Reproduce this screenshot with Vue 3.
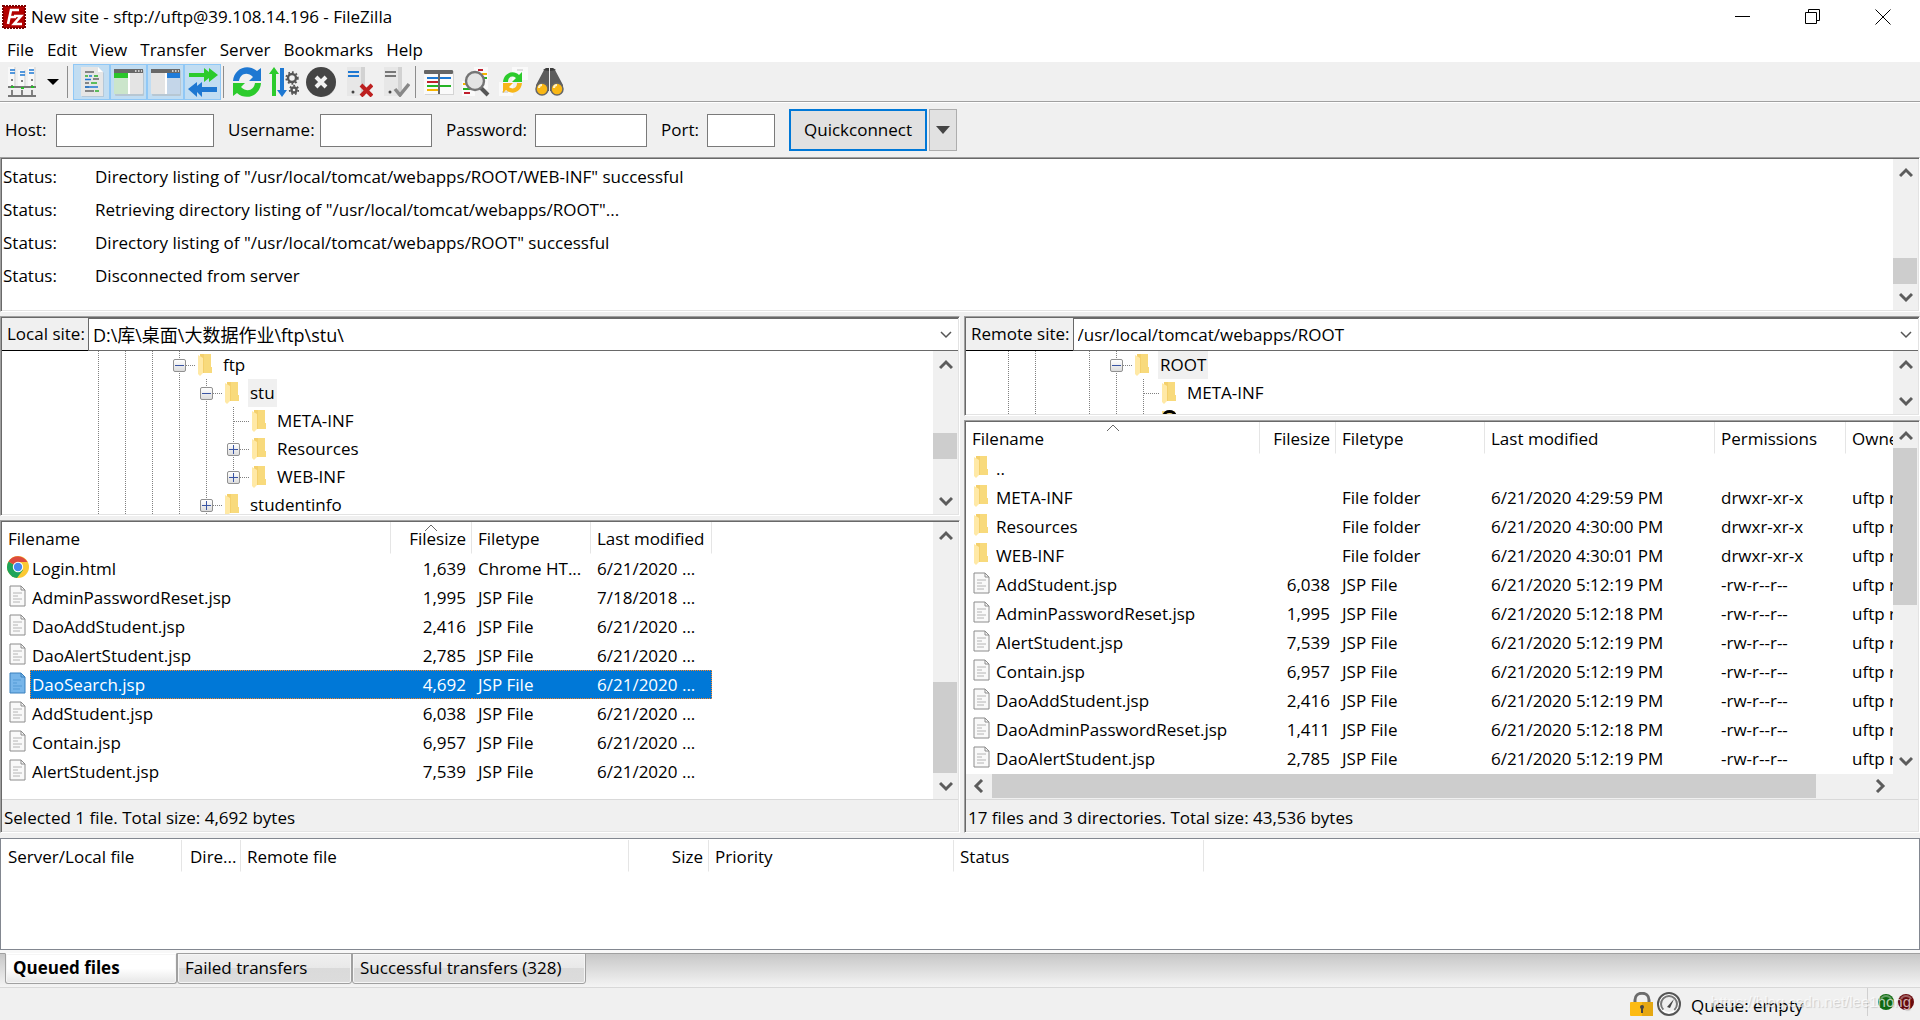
<script setup>
import { h } from 'vue'

const menus = ['File', 'Edit', 'View', 'Transfer', 'Server', 'Bookmarks', 'Help']

const cog = (cx, cy, r) =>
  `<circle cx="${cx}" cy="${cy}" r="${r}" fill="none" stroke="#555" stroke-width="2.4"/>` +
  `<circle cx="${cx}" cy="${cy}" r="${r + 1.8}" fill="none" stroke="#555" stroke-width="1.8" stroke-dasharray="1.8 2"/>`

const windowFrame =
  '<rect x="1" y="3" width="29" height="26" rx="1" fill="#b7c7d3"/><rect x="0" y="2" width="29" height="25" rx="1" fill="#e4e4e4"/><rect x="0" y="2" width="29" height="4" fill="#686868"/><path d="M21 4h1.5M24 4h1.5M27 4h1" stroke="#eee" stroke-width="1.5"/>'

const art = {
  log: '<path d="M5 1h17l5 5v24H5z" fill="#b5c8d8"/><path d="M4 0h17l5 5v24H4z" fill="#e6e6e6"/><path d="M21 0v5h5z" fill="#fff"/><g stroke-width="1.6"><path d="M8 5h9M16 12h6M8 16h4M8 20h4M8 24h9" stroke="#666"/><path d="M8 9h3M14 16h6M18 24h4" stroke="#2fae2f" /><path d="M8 12.5h6M8 20h13M12 9h3" stroke="#1d78d6"/><path d="M17 9h4" stroke="#2fae2f"/></g>',
  local: windowFrame + '<rect x="0" y="6" width="14" height="5" fill="#2bc52b"/><rect x="0" y="11" width="14" height="16" fill="#cbe5cb"/><path d="M15 6v21" stroke="#fff" stroke-width="2"/>',
  remote: windowFrame + '<rect x="16" y="6" width="13" height="5" fill="#1e7bd9"/><rect x="16" y="11" width="13" height="16" fill="#c4d6e9"/><path d="M15 6v21" stroke="#fff" stroke-width="2"/>',
  queue: '<path d="M1 6h15V1l5 4V1l9 7-9 7v-4l-5 4v-5H1z" fill="#2ccb2c"/><path d="M29 20H14v-5l-5 4v-4l-9 7 9 8v-5l5 5v-5h15z" fill="#1e78d2"/>',
  refresh: '<path d="M1 14C2 1 16-4 25 4l4-3v13H17l4-4C15 4 8 7 7 14z" fill="#1e78d2"/><path d="M29 16C28 29 14 34 5 26l-4 3V16h12l-4 4c6 6 13 3 14-4z" fill="#2ccb2c"/>',
  process: '<path d="M5 0l5 7H7v22H3V7H0z" fill="#2ccb2c"/><path d="M13 30l-5-7h3V1h4v22h3z" fill="#1e78d2"/>' + cog(23, 11, 4) + cog(25, 23, 2.5),
  cancel: '<circle cx="16" cy="16" r="14" fill="#c4c4c4"/><circle cx="15" cy="15" r="15" fill="#454545"/><path d="M10 10l10 10M20 10L10 20" stroke="#f2f2f2" stroke-width="4"/>',
  disconnect: '<path d="M4 0h18v29H4z" fill="#e7e7e7"/><path d="M18 0h4v29h-4z" fill="#d2d2d2"/><path d="M5 5h11M5 9h11" stroke="#1e78d2" stroke-width="2"/><circle cx="10" cy="25" r="1.5" fill="#444"/><path d="M18 18l11 11M29 18L18 29" stroke="#bd2020" stroke-width="4"/>',
  reconnect: '<path d="M4 0h18v29H4z" fill="#e7e7e7"/><path d="M18 0h4v29h-4z" fill="#d2d2d2"/><path d="M5 5h11M5 9h11" stroke="#777" stroke-width="2"/><circle cx="10" cy="25" r="1.5" fill="#444"/><path d="M15 22l5 6 9-11" fill="none" stroke="#888" stroke-width="3.5"/>',
  filter: '<rect x="1" y="4" width="29" height="24" fill="#d4d4d4"/><rect x="0" y="3" width="29" height="24" fill="#fafafa"/><rect x="0" y="3" width="29" height="4" rx="1" fill="#666"/><g stroke-width="2"><path d="M3 11h24" stroke="#1e78d2"/><path d="M3 15h11" stroke="#c01f2c"/><path d="M3 19h24" stroke="#24b324"/><path d="M3 23h11" stroke="#f5b400"/></g><path d="M15 7v20" stroke="#666" stroke-width="2"/>',
  compare: '<path d="M13 0h14v22H13z" fill="#fafafa"/><path d="M1 14h13v15H1z" fill="#fafafa"/><g stroke-width="2"><path d="M17 3h5M3 26h6" stroke="#c01f2c"/><path d="M21 7h5M2 17h4" stroke="#f5b400"/><path d="M23 11h3M2 22h7" stroke="#24b324"/></g><path d="M20 21l7 7" stroke="#555" stroke-width="4"/><circle cx="14" cy="14" r="9" fill="#e4e4e4" stroke="#757575" stroke-width="2.4"/>',
  sync: '<path d="M14 0h16v13H14z" fill="#fafafa"/><path d="M1 15h14v14H1z" fill="#fafafa"/><path d="M19 3h6M4 25h6" stroke="#ddd" stroke-width="2"/><path d="M5 15C6 5 16 3 21 8l3-3v10H14l4-4c-4-3-8-1-8 4z" fill="#2ccb2c"/><path d="M24 16C23 26 13 28 8 23l-3 3V16h10l-4 4c4 3 8 1 8-4z" fill="#f7b61a"/>',
  find: '<path d="M9 3l5-1v22H1v-6zM20 3l-5-1v22h13v-6z" fill="#5d5d5d"/><path d="M8 3l3-2h3v3zM15 4V1h3l3 2z" fill="#3c3c3c"/><circle cx="7" cy="22" r="6" fill="#f9b715" stroke="#666" stroke-width="1.5"/><circle cx="22" cy="22" r="6" fill="#f9b715" stroke="#666" stroke-width="1.5"/><path d="M4 21c0-2 1-3 3-3M19 21c0-2 1-3 3-3" stroke="#fff3c8" stroke-width="2" fill="none"/>',
  sites: '<g fill="#e2e2e2"><path d="M1 0h8v20H1zM11 3h8v18h-8zM21 0h8v20h-8z"/></g><g fill="#f8f8f8"><path d="M1 0h6v20H1zM11 3h6v18h-6zM21 0h6v20h-6z"/></g><path d="M3 3h5M3 6h5M13 5h5M13 8h5M22 3h5M22 6h5" stroke="#1e78d2" stroke-width="1.5"/><path d="M5 12v2M15 13v2M25 12v2" stroke="#555" stroke-width="1.5"/><path d="M1 20h28M1 29h28M5 18v3M15 19v3M25 18v3M5 23v6M15 23v6M25 23v6" stroke="#777" stroke-width="1.8"/><path d="M4 20h3M14 21h3M24 20h3" stroke="#28b828" stroke-width="2"/>'
}

const toolbar = [
  { label: 'Toggle message log', icon: 'log', on: true },
  { label: 'Toggle local tree', icon: 'local', on: true },
  { label: 'Toggle remote tree', icon: 'remote', on: true },
  { label: 'Toggle transfer queue', icon: 'queue', on: true },
  null,
  { label: 'Refresh', icon: 'refresh' },
  { label: 'Process queue', icon: 'process' },
  { label: 'Cancel', icon: 'cancel' },
  { label: 'Disconnect', icon: 'disconnect' },
  { label: 'Reconnect', icon: 'reconnect' },
  null,
  { label: 'Filters', icon: 'filter' },
  { label: 'Compare', icon: 'compare' },
  { label: 'Synchronize', icon: 'sync' },
  { label: 'Search', icon: 'find' }
]

const fields = [
  { id: 'host', label: 'Host:', type: 'text' },
  { id: 'user', label: 'Username:', type: 'text' },
  { id: 'pass', label: 'Password:', type: 'password' },
  { id: 'port', label: 'Port:', type: 'text' }
]

const log = [
  'Directory listing of "/usr/local/tomcat/webapps/ROOT/WEB-INF" successful',
  'Retrieving directory listing of "/usr/local/tomcat/webapps/ROOT"...',
  'Directory listing of "/usr/local/tomcat/webapps/ROOT" successful',
  'Disconnected from server'
]

// Guide kinds: l = line, n = nothing, t = branch, m = collapse box, p = expand box, e = last expand box
const localTree = [
  { guides: 'lllm', name: 'ftp' },
  { guides: 'llllm', name: 'stu', current: true },
  { guides: 'lllllt', name: 'META-INF' },
  { guides: 'lllllp', name: 'Resources' },
  { guides: 'llllle', name: 'WEB-INF' },
  { guides: 'llllp', name: 'studentinfo' }
]
const remoteTree = [
  { guides: 'llnlm', name: 'ROOT', current: true },
  { guides: 'llnllt', name: 'META-INF' },
  { guides: 'llnllt', name: '', unknown: true }
]

const localFiles = [
  ['Login.html', '1,639', 'Chrome HT...', '6/21/2020 ...'],
  ['AdminPasswordReset.jsp', '1,995', 'JSP File', '7/18/2018 ...'],
  ['DaoAddStudent.jsp', '2,416', 'JSP File', '6/21/2020 ...'],
  ['DaoAlertStudent.jsp', '2,785', 'JSP File', '6/21/2020 ...'],
  ['DaoSearch.jsp', '4,692', 'JSP File', '6/21/2020 ...'],
  ['AddStudent.jsp', '6,038', 'JSP File', '6/21/2020 ...'],
  ['Contain.jsp', '6,957', 'JSP File', '6/21/2020 ...'],
  ['AlertStudent.jsp', '7,539', 'JSP File', '6/21/2020 ...']
]
const selected = 'DaoSearch.jsp'

const dir = 'drwxr-xr-x'
const reg = '-rw-r--r--'
const remoteFiles = [
  ['..', '', '', '', '', ''],
  ['META-INF', '', 'File folder', '6/21/2020 4:29:59 PM', dir, 'uftp root'],
  ['Resources', '', 'File folder', '6/21/2020 4:30:00 PM', dir, 'uftp root'],
  ['WEB-INF', '', 'File folder', '6/21/2020 4:30:01 PM', dir, 'uftp root'],
  ['AddStudent.jsp', '6,038', 'JSP File', '6/21/2020 5:12:19 PM', reg, 'uftp root'],
  ['AdminPasswordReset.jsp', '1,995', 'JSP File', '6/21/2020 5:12:18 PM', reg, 'uftp root'],
  ['AlertStudent.jsp', '7,539', 'JSP File', '6/21/2020 5:12:19 PM', reg, 'uftp root'],
  ['Contain.jsp', '6,957', 'JSP File', '6/21/2020 5:12:19 PM', reg, 'uftp root'],
  ['DaoAddStudent.jsp', '2,416', 'JSP File', '6/21/2020 5:12:19 PM', reg, 'uftp root'],
  ['DaoAdminPasswordReset.jsp', '1,411', 'JSP File', '6/21/2020 5:12:18 PM', reg, 'uftp root'],
  ['DaoAlertStudent.jsp', '2,785', 'JSP File', '6/21/2020 5:12:19 PM', reg, 'uftp root']
]

const queueColumns = [
  { name: 'Server/Local file', cls: 'q1' },
  { name: 'Dire...', cls: 'q2' },
  { name: 'Remote file', cls: 'q3' },
  { name: 'Size', cls: 'q4 num' },
  { name: 'Priority', cls: 'q5' },
  { name: 'Status', cls: 'q6' },
  { name: '', cls: 'rest' }
]

const svg = (w, hgt, inner) => h('svg', { width: w, height: hgt, viewBox: `0 0 ${w} ${hgt}`, innerHTML: inner, 'aria-hidden': 'true' })

const Folder = () =>
  svg(14, 22, '<path d="M2 0h11v13h1v6H2z" fill="#f4d06c"/><path d="M6 0h7v13h1v6H6z" fill="#f8da7c"/><path d="M0 1l5 3v15l-3 3-2-2z" fill="#ffe9a6"/>')

const Page = (props) =>
  svg(17, 22, props.blue
    ? '<path d="M1 1h11l4 4v16H1z" fill="#78b6ea" stroke="#3a80bd"/><path d="M12 1v4h4" fill="none" stroke="#3a80bd"/><path d="M4 8h8M4 11h4M4 14h9M4 17h7" stroke="#559bd6"/>'
    : '<path d="M1 1h11l4 4v16H1z" fill="#f9f9f9" stroke="#8c8c8c"/><path d="M12 1v4h4" fill="none" stroke="#8c8c8c"/><path d="M4 8h9M4 11h5M4 14h9M4 17h7" stroke="#b4b4b4"/>')
Page.props = ['blue']

const Chrome = () =>
  svg(22, 22, '<circle cx="11" cy="11" r="11" fill="#fbc934"/><path d="M11 11L1.5 5.500A11 11 0 0 0 10 22l6-8z" fill="#1fa45a"/><path d="M11 11L1.500 5.500A11 11 0 0 1 20.500 6H11z" fill="#dd4b3e"/><circle cx="11" cy="11" r="5.200" fill="#fff"/><circle cx="11" cy="11" r="4.200" fill="#4688f1"/>')

const arrows = {
  up: 'M1 11l6-6 6 6',
  down: 'M1 4l6 6 6-6',
  left: 'M10 1L4 7l6 6',
  right: 'M4 1l6 6-6 6'
}
const arrow = (kind) => svg(14, 14, `<path d="${arrows[kind]}" fill="none" stroke="#5c5c5c" stroke-width="3"/>`)

const ScrollBar = (props) => {
  const [before, thumb, after] = props.split
  return h('div', { class: ['scroll', props.across ? 'across' : 'upright'] }, [
    h('span', { class: 'end' }, [arrow(props.across ? 'left' : 'up')]),
    h('span', { style: { flexGrow: before } }),
    h('span', { class: 'thumb', style: { flexGrow: thumb } }),
    h('span', { style: { flexGrow: after } }),
    h('span', { class: 'end' }, [arrow(props.across ? 'right' : 'down')])
  ])
}
ScrollBar.props = { split: Array, across: Boolean }

const SortMark = () => svg(14, 8, '<path d="M1 7l6-6 6 6" fill="none" stroke="#666"/>')
const Chevron = () => svg(12, 8, '<path d="M1 1l5 5 5-5" fill="none" stroke="#555" stroke-width="1.500"/>')
</script>

<template>
  <div class="app">
    <header class="title-bar">
      <svg class="logo" width="24" height="24" viewBox="0 0 24 24" aria-hidden="true">
        <rect x="1" y="1" width="22" height="22" fill="#b30000" stroke="#7c0000" stroke-width="2" stroke-dasharray="2 1" />
        <path d="M6 19L9 5h8M8 12h6M12 11h7l-7 8h8" fill="none" stroke="#fff" stroke-width="2.600" />
      </svg>
      <h1>New site - sftp://uftp@39.108.14.196 - FileZilla</h1>
      <div class="window-buttons">
        <button type="button" aria-label="Minimize"><svg width="16" height="16" viewBox="0 0 16 16"><path d="M0 7.500h15" stroke="#000" /></svg></button>
        <button type="button" aria-label="Restore"><svg width="16" height="16" viewBox="0 0 16 16"><path d="M.5 3.500h11v11H.5zM3.500 3.500v-3h11v11h-3" fill="none" stroke="#000" /></svg></button>
        <button type="button" aria-label="Close"><svg width="16" height="16" viewBox="0 0 16 16"><path d="M.5.5l15 15M15.500.5l-15 15" stroke="#000" /></svg></button>
      </div>
    </header>

    <nav class="menu-bar">
      <button v-for="m in menus" :key="m" type="button">{{ m }}</button>
    </nav>

    <div class="toolbar">
      <button class="sites" type="button" aria-label="Site manager">
        <svg width="30" height="30" viewBox="0 0 30 30" v-html="art.sites"></svg>
        <svg width="12" height="6" viewBox="0 0 12 6"><path d="M0 0h12L6 6z" /></svg>
      </button>
      <span class="divider first"></span>
      <template v-for="(t, i) in toolbar" :key="i">
        <span v-if="!t" class="divider"></span>
        <button v-else type="button" class="tool" :class="{ on: t.on }" :aria-label="t.label">
          <svg width="30" height="30" viewBox="0 0 30 30" v-html="art[t.icon]"></svg>
        </button>
      </template>
    </div>

    <form class="quick" @submit.prevent>
      <div v-for="f in fields" :key="f.id" class="field" :class="f.id">
        <label :for="f.id">{{ f.label }}</label>
        <input :id="f.id" :type="f.type" />
      </div>
      <button class="connect" type="button">Quickconnect</button>
      <button class="history" type="button" aria-label="Recent servers">
        <svg width="14" height="8" viewBox="0 0 14 8"><path d="M0 0h14L7 8z" fill="#444" /></svg>
      </button>
    </form>

    <section class="log sunk">
      <div class="log-lines">
        <p v-for="(line, i) in log" :key="i"><span class="kind">Status:</span><span>{{ line }}</span></p>
      </div>
      <ScrollBar :split="[73, 26, 0]" />
    </section>

    <main class="panes">
      <section class="pane">
        <div class="site sunk local-site">
          <div class="path">
            <label for="local-path">Local site:</label>
            <div class="combo">
              <select id="local-path"><option>D:\库\桌面\大数据作业\ftp\stu\</option></select>
              <Chevron />
            </div>
          </div>
          <div class="tree-area">
            <div class="tree">
              <div v-for="row in localTree" :key="row.name" class="node">
                <i v-for="(g, i) in row.guides" :key="i" class="guide" :class="g"><b v-if="'mpe'.includes(g)"></b></i>
                <Folder /><span class="node-name" :class="{ current: row.current }">{{ row.name }}</span>
              </div>
            </div>
            <ScrollBar :split="[56, 26, 29]" />
          </div>
        </div>
        <div class="list sunk">
          <div class="list-area">
            <div class="clip">
              <table class="local-table">
                <thead>
                  <tr><th class="c-name">Filename</th><th class="c-size num"><SortMark />Filesize</th><th class="c-type">Filetype</th><th class="c-date">Last modified</th></tr>
                </thead>
                <tbody>
                  <tr v-for="f in localFiles" :key="f[0]" :class="{ picked: f[0] === selected }">
                    <td class="name"><div><Chrome v-if="f[0].endsWith('.html')" /><Page v-else :blue="f[0] === selected" /><span>{{ f[0] }}</span></div></td>
                    <td class="num">{{ f[1] }}</td><td>{{ f[2] }}</td><td>{{ f[3] }}</td>
                  </tr>
                </tbody>
              </table>
            </div>
            <ScrollBar :split="[134, 91, 0]" />
          </div>
          <p class="summary">Selected 1 file. Total size: 4,692 bytes</p>
        </div>
      </section>

      <section class="pane">
        <div class="site sunk remote-site">
          <div class="path">
            <label for="remote-path">Remote site:</label>
            <div class="combo">
              <select id="remote-path"><option>/usr/local/tomcat/webapps/ROOT</option></select>
              <Chevron />
            </div>
          </div>
          <div class="tree-area">
            <div class="tree">
              <div v-for="row in remoteTree" :key="row.name" class="node">
                <i v-for="(g, i) in row.guides" :key="i" class="guide" :class="g"><b v-if="'mpe'.includes(g)"></b></i>
                <svg v-if="row.unknown" width="14" height="22" viewBox="0 0 14 22" aria-hidden="true"><path d="M0 1h13v20H0z" fill="#f8da7c" /><path d="M2 6c0-6 11-6 11 0 0 4-5 3-5 8" fill="none" stroke="#000" stroke-width="3" /></svg>
                <Folder v-else /><span class="node-name" :class="{ current: row.current }">{{ row.name }}</span>
              </div>
            </div>
            <ScrollBar :split="[1, 0, 0]" />
          </div>
        </div>
        <div class="list sunk">
          <div class="list-area">
            <div class="clip">
              <table class="remote-table">
                <thead>
                  <tr><th class="c-name"><SortMark />Filename</th><th class="c-size num">Filesize</th><th class="c-type">Filetype</th><th class="c-date">Last modified</th><th class="c-perm">Permissions</th><th class="c-owner">Owner/Group</th></tr>
                </thead>
                <tbody>
                  <tr v-for="f in remoteFiles" :key="f[0]">
                    <td class="name"><div><Page v-if="f[0].endsWith('.jsp')" /><Folder v-else /><span>{{ f[0] }}</span></div></td>
                    <td class="num">{{ f[1] }}</td><td>{{ f[2] }}</td><td>{{ f[3] }}</td><td>{{ f[4] }}</td><td>{{ f[5] }}</td>
                  </tr>
                </tbody>
              </table>
            </div>
            <ScrollBar :split="[0, 157, 143]" />
          </div>
          <div class="bottom-scroll"><ScrollBar across :split="[0, 824, 51]" /></div>
          <p class="summary">17 files and 3 directories. Total size: 43,536 bytes</p>
        </div>
      </section>
    </main>

    <section class="queue">
      <table>
        <thead><tr><th v-for="c in queueColumns" :key="c.cls" :class="c.cls">{{ c.name }}</th></tr></thead>
      </table>
    </section>

    <div class="tabs">
      <button type="button" class="tab active">Queued files</button>
      <button type="button" class="tab failed">Failed transfers</button>
      <button type="button" class="tab done">Successful transfers (328)</button>
    </div>

    <footer class="status">
      <svg width="24" height="24" viewBox="0 0 24 24" aria-hidden="true">
        <path d="M5 11V8c0-9 14-9 14 0v3" fill="none" stroke="#6b6b6b" stroke-width="3" /><rect y="10" width="23" height="14" rx="1" fill="#fdbb12" /><path d="M12 10h11v14H12z" fill="#e5a813" /><circle cx="12" cy="15" r="2" fill="#444" /><path d="M12 15v6" stroke="#444" stroke-width="2" />
      </svg>
      <svg width="24" height="24" viewBox="0 0 24 24" aria-hidden="true">
        <circle cx="12" cy="12" r="11" fill="#fff" stroke="#555" stroke-width="2" /><circle cx="12" cy="12" r="8" fill="#eee" stroke="#777" stroke-width="2" stroke-dasharray="38 13" transform="rotate(135 12 12)" /><path d="M10 15l7-8-4 9z" fill="#444" />
      </svg>
      <span class="queue-state">Queue: empty</span>
      <span class="lamps">
        <svg width="38" height="18" viewBox="0 0 38 18" aria-hidden="true">
          <circle cx="9" cy="9" r="8" fill="#0f6b12" /><circle cx="29" cy="9" r="8" fill="#6b0b0e" /><path d="M4 6c2-4 8-4 10 0M24 6c2-4 8-4 10 0" fill="none" stroke="#fff" stroke-opacity=".35" stroke-width="2" />
        </svg>
      </span>
      <span class="watermark">https://blog.csdn.net/lee1hong</span>
    </footer>
  </div>
</template>

<style>
body {
  margin: 0;
  background: #f0f0f0;
}
</style>

<style scoped>
.app {
  display: flex;
  flex-direction: column;
  min-height: 100vh;
  background: #f0f0f0;
  color: #000;
  font: 17px/22px "Open Sans", "Noto Sans", "Noto Sans CJK SC", sans-serif;
}
.app :deep(*) {
  box-sizing: border-box;
}
button,
input,
select {
  font: inherit;
  color: inherit;
  margin: 0;
  border-radius: 0;
}
button {
  padding: 0;
  border: 0;
  background: none;
  white-space: nowrap;
}
p,
h1 {
  margin: 0;
  font: inherit;
}
svg,
.app :deep(svg) {
  display: block;
  flex: none;
}

.title-bar {
  display: flex;
  align-items: center;
  height: 34px;
  padding: 0 2px;
  gap: 5px;
  background: #fff;
}
.window-buttons {
  display: flex;
  margin-left: auto;
}
.window-buttons button {
  display: flex;
  align-items: center;
  justify-content: center;
  width: 70px;
  height: 34px;
}
.menu-bar {
  display: flex;
  height: 28px;
  gap: 13px;
  padding: 4px 7px 0;
  background: #fff;
}

.toolbar {
  display: flex;
  align-items: center;
  height: 41px;
  padding: 0 7px;
  border-bottom: 1px solid #fff;
  box-shadow: inset 0 -1px #a0a0a0;
}
.sites {
  display: flex;
  align-items: center;
  gap: 10px;
  width: 60px;
}
.divider {
  width: 7px;
  height: 32px;
  background: linear-gradient(#8d8d8d, #8d8d8d) 2px 0 / 1px 100% no-repeat;
}
.divider.first {
  width: 6px;
  background-position: 0 0;
}
.tool {
  display: flex;
  align-items: center;
  justify-content: center;
  width: 37px;
  height: 36px;
}
.tool.on {
  background: #c1ddf2;
  border: 1px solid #90c8f6;
}

.quick {
  display: flex;
  align-items: center;
  height: 54px;
  padding-left: 5px;
}
.field {
  display: flex;
  align-items: center;
  margin-right: 14px;
}
.field input {
  width: 112px;
  height: 33px;
  padding: 0 4px;
  border: 1px solid #7a7a7a;
  background: #fff;
}
.host label {
  width: 51px;
}
.host input {
  width: 158px;
}
.user label {
  width: 92px;
}
.pass label {
  width: 89px;
}
.port label {
  width: 46px;
}
.port input {
  width: 68px;
}
.connect {
  width: 138px;
  height: 42px;
  border: 2px solid #0078d7;
  background: #e1e1e1;
}
.history {
  display: flex;
  align-items: center;
  justify-content: center;
  width: 28px;
  height: 42px;
  margin-left: 2px;
  border: 1px solid #adadad;
  background: #e1e1e1;
}

.sunk {
  display: flex;
  padding: 1px;
  border: 1px solid;
  border-color: #a0a0a0 #fff #fff #a0a0a0;
  box-shadow: inset 1px 1px #696969, inset -1px -1px #e3e3e3;
}

.log {
  height: 155px;
}
.log-lines {
  flex: 1;
  padding-top: 1px;
  background: #fff;
}
.log-lines p {
  display: flex;
  height: 33px;
  padding-left: 1px;
  line-height: 33px;
}
.kind {
  width: 92px;
}

.app :deep(.scroll) {
  display: flex;
  flex: none;
  background: #f0f0f0;
}
.app :deep(.upright) {
  flex-direction: column;
  width: 25px;
}
.app :deep(.across) {
  flex: 1;
  height: 25px;
}
.app :deep(.end) {
  display: flex;
  flex: none;
  align-items: center;
  justify-content: center;
  width: 25px;
  height: 26px;
}
.app :deep(.across .end) {
  width: 26px;
  height: 24px;
}
.app :deep(.thumb) {
  background: #cdcdcd;
}
.app :deep(.upright .thumb) {
  width: 24px;
}
.app :deep(.across .thumb) {
  height: 24px;
}

.panes {
  display: grid;
  flex: 1;
  grid-template-columns: minmax(0, 960fr) minmax(0, 956fr);
  gap: 4px;
  margin: 4px 0 5px;
}
.pane {
  display: flex;
  flex-direction: column;
  gap: 4px;
}
.site {
  flex-direction: column;
}
.local-site {
  height: 200px;
}
.remote-site {
  height: 100px;
}
.path {
  display: flex;
  flex: none;
  height: 33px;
}
.path label {
  padding: 0 3px 0 5px;
  border-bottom: 1px solid #000;
  line-height: 32px;
}
.combo {
  display: flex;
  flex: 1;
  align-items: center;
  padding-right: 6px;
  border: solid #696969;
  border-width: 1px 0 1px 1px;
  background: #fff;
}
.combo select {
  flex: 1;
  height: 30px;
  padding: 0 4px;
  border: 0;
  appearance: none;
  background: #fff;
}
#local-path {
  font-size: 18px;
}
.tree-area {
  display: flex;
  flex: 1;
  min-height: 0;
}
.tree {
  flex: 1;
  overflow: hidden;
  background: #fff;
}
.local-site .tree {
  padding-left: 83px;
}
.remote-site .tree {
  padding-left: 29px;
}
.node {
  display: flex;
  align-items: center;
  height: 28px;
}
.node-name {
  margin-left: 9px;
  padding: 0 2px;
  line-height: 28px;
}
.current {
  background: #f0f0f0;
}
.guide {
  display: flex;
  align-items: center;
  justify-content: center;
  width: 27px;
  height: 28px;
  background: repeating-linear-gradient(#808080 0 1px, transparent 1px 2px) 13px 0 / 1px 100% no-repeat;
}
.guide.n {
  background: none;
}
.guide:nth-last-child(3) {
  margin-right: 5px;
}
.guide.t,
.guide.m,
.guide.p,
.guide.e {
  position: relative;
}
.guide.e {
  background-size: 1px 50%;
}
.guide.t::after,
.guide.m::after,
.guide.p::after,
.guide.e::after {
  content: "";
  position: absolute;
  top: 14px;
  left: 14px;
  width: 15px;
  height: 1px;
  background: repeating-linear-gradient(90deg, #808080 0 1px, transparent 1px 2px);
}
.guide b {
  z-index: 1;
  width: 13px;
  height: 13px;
  border: 1px solid #919191;
  border-radius: 2px;
  background:
    linear-gradient(#3a55a4, #3a55a4) 50% 50% / 9px 1px no-repeat,
    linear-gradient(#fff, #dcdcdc);
}
.guide.p b,
.guide.e b {
  background:
    linear-gradient(#3a55a4, #3a55a4) 50% 50% / 9px 1px no-repeat,
    linear-gradient(#3a55a4, #3a55a4) 50% 50% / 1px 9px no-repeat,
    linear-gradient(#fff, #dcdcdc);
}

.list {
  flex: 1;
  flex-direction: column;
}
.list-area {
  display: flex;
  flex: 1;
  min-height: 0;
}
.clip {
  flex: 1;
  min-width: 0;
  overflow: hidden;
  background: #fff;
}
table {
  table-layout: fixed;
  border-spacing: 0;
}
th {
  position: relative;
  height: 32px;
  padding: 2px 5px 0 6px;
  border-right: 1px solid #e5e5e5;
  border-bottom: 1px solid #fff;
  background: #fff;
  font-weight: 400;
  text-align: left;
  white-space: nowrap;
}
th :deep(svg) {
  position: absolute;
  top: 2px;
  left: 50%;
  margin-left: -7px;
}
td {
  height: 29px;
  padding: 0 6px;
  white-space: nowrap;
}
.num {
  text-align: right;
}
.name {
  padding: 0;
}
.name div {
  display: flex;
  height: 29px;
}
.name :deep(svg) {
  margin: 2px 4px 0 7px;
}
.name :deep(svg[width="22"]) {
  margin: 2px 1px 0 5px;
}
.name :deep(svg[width="14"]) {
  margin: 2px 6px 0 8px;
}
.name span {
  flex: 1;
  padding-left: 2px;
  line-height: 29px;
}
.local-table {
  width: 710px;
}
.local-table .c-name {
  width: 389px;
}
.local-table .c-size {
  width: 81px;
}
.local-table .c-type {
  width: 119px;
}
.picked td {
  border: dotted #ff8728;
  border-width: 1px 0;
  background: #0078d7;
  color: #fff;
}
.picked td.name {
  border: 0;
  background: none;
}
.picked td:last-child {
  border-right-width: 1px;
}
.picked .name span {
  padding-left: 1px;
  border: dotted #ff8728;
  border-width: 1px 0 1px 1px;
  background: #0078d7;
  line-height: 27px;
}
.remote-table {
  width: 1000px;
}
.remote-table .c-name {
  width: 294px;
}
.remote-table .c-size {
  width: 76px;
}
.remote-table .c-type {
  width: 149px;
}
.remote-table .c-date {
  width: 230px;
}
.remote-table .c-perm {
  width: 131px;
}
.bottom-scroll {
  display: flex;
  height: 25px;
  padding-right: 25px;
}
.summary {
  height: 32px;
  padding-left: 2px;
  border-top: 1px solid #d9d9d9;
  line-height: 36px;
}

.queue {
  height: 112px;
  padding: 1px;
  border: 1px solid #828790;
  background: #fff;
}
.queue table {
  width: 100%;
}
.queue .rest {
  border-right: 0;
}
.q1 {
  width: 180px;
}
.q2 {
  width: 59px;
  padding-left: 8px;
}
.q3 {
  width: 388px;
}
.q4 {
  width: 80px;
}
.q5 {
  width: 245px;
}
.q6 {
  width: 250px;
}

.tabs {
  display: flex;
  height: 38px;
  padding: 0 5px;
  border-top: 3px solid #f8f8f8;
  border-bottom: 1px solid #d8d8d8;
  background: linear-gradient(#c6c6c6, #f4f4f4);
  box-shadow: inset 0 1px #a0a0a0;
}
.tab {
  height: 31px;
  padding: 0 7px 2px;
  border: 1px solid #a0a0a0;
  border-radius: 0 0 3px 3px;
  background: linear-gradient(#f0f0f0, #e8e8e8 50%, #dadada 50%, #dcdcdc);
  box-shadow: inset 0 0 0 1px #f5f5f5;
  text-align: left;
}
.tab.active {
  width: 172px;
  border-top-color: #fff;
  background: linear-gradient(#fff 50%, #e6e6e6);
  font-weight: 700;
}
.failed {
  width: 175px;
}
.done {
  width: 234px;
}

.status {
  position: relative;
  display: flex;
  align-items: flex-start;
  justify-content: flex-end;
  height: 32px;
  padding: 4px 5px 0 0;
}
.status svg {
  margin-right: 3px;
}
.queue-state {
  width: 183px;
  padding: 3px 0 0 7px;
}
.lamps {
  display: flex;
  align-items: center;
  height: 28px;
  margin-top: -4px;
  padding-left: 9px;
  border-left: 1px solid #d0d0d0;
}
.lamps svg {
  margin: 0;
}
.watermark {
  position: absolute;
  top: 3px;
  right: 9px;
  color: rgba(255, 255, 255, 0.7);
  font: 15px/22px "Liberation Sans", sans-serif;
  text-shadow: 1px 1px 1px rgba(0, 0, 0, 0.15);
}
</style>
